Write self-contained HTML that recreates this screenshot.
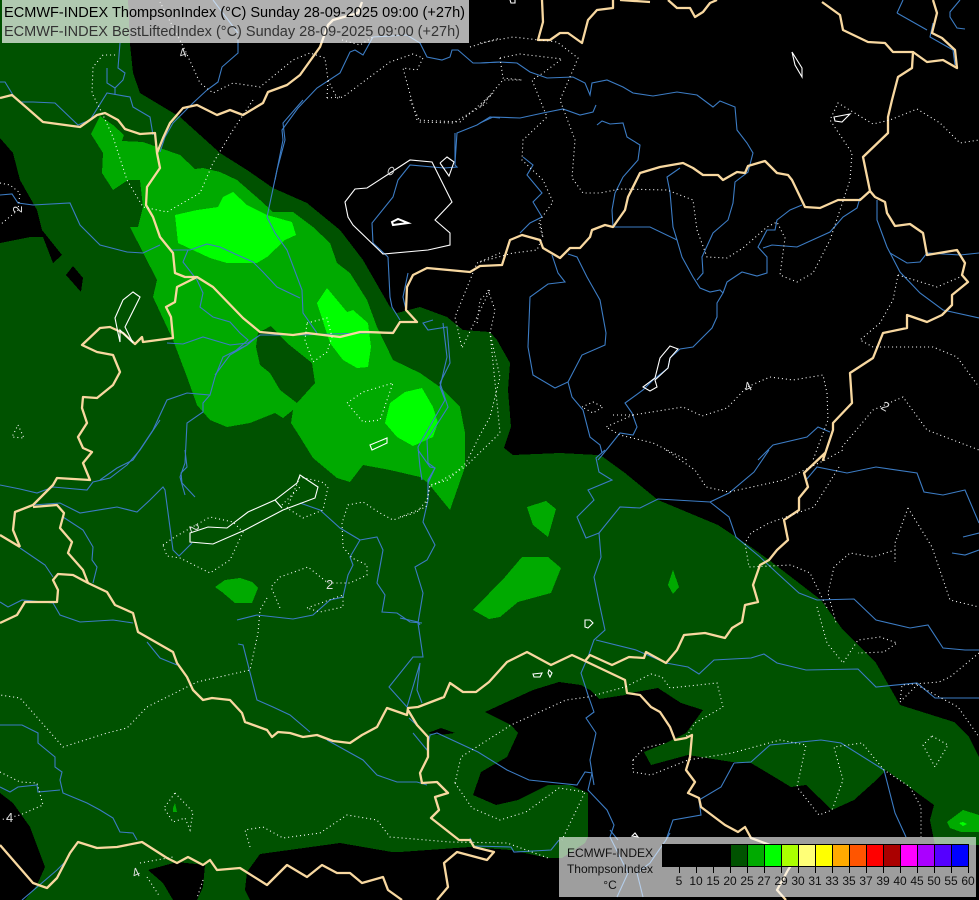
<!DOCTYPE html>
<html><head><meta charset="utf-8"><style>
html,body{margin:0;padding:0;background:#000;width:979px;height:900px;overflow:hidden}
svg{display:block}
text{font-family:"Liberation Sans",sans-serif}
.f{shape-rendering:crispEdges}
.d{fill:#005200}.m{fill:#00aa00}.b{fill:#00ff00}
.r polyline{fill:none;stroke:#3c7cc4;stroke-width:1.1}
.c polyline{fill:none;stroke:#f8d8a0;stroke-width:2.3;stroke-linejoin:round}
.t polyline{fill:none;stroke:#fff;stroke-width:1.1;stroke-dasharray:1 3;stroke-linecap:butt}
.w polyline,.w polygon{fill:none;stroke:#fff;stroke-width:1.1}
.l text{fill:#ddd;font-size:13px}
.k text{font-size:12px;fill:#111;text-anchor:middle}
</style></head><body>
<svg width="979" height="900" viewBox="0 0 979 900" xmlns="http://www.w3.org/2000/svg">
<rect width="979" height="900" fill="#000"/>
<g class="f">
<polygon class="d" points="0,0 128,0 130,44 133,73 140,93 180,117 220,153 247,170 273,188 307,203 340,230 363,260 390,307 397,313 420,307 447,317 463,330 490,332 497,340 510,363 508,390 511,427 504,448 513,455 560,453 597,455 603,457 625,473 658,500 718,525 751,547 769,560 821,600 843,630 876,663 900,705 954,722 969,737 979,757 979,845 935,845 930,820 934,805 886,770 873,783 854,800 832,810 806,785 791,787 751,763 732,762 688,755 651,765 644,752 666,743 686,733 703,710 681,703 658,688 636,692 625,695 599,699 590,690 581,685 559,682 533,690 485,712 511,725 518,733 507,757 481,772 473,795 496,805 518,800 548,785 570,785 588,793 588,837 585,843 562,858 548,858 511,850 470,847 400,852 392,852 340,843 260,854 247,872 245,890 250,900 197,900 203,887 205,865 177,862 148,870 163,883 173,900 25,900 37,885 45,867 30,827 13,803 0,793"/>
<polygon fill="#000" points="0,138 13,153 20,180 37,210 42,230 62,255 53,263 43,237 30,237 0,243"/>
<polygon fill="#000" points="66,275 73,266 83,278 81,292"/>
<polygon fill="#000" points="428,733 441,728 455,733 440,735"/>
<polygon class="m" points="91,134 100,116 113,125 124,135 122,141 143,142 180,155 195,169 203,168 220,172 237,180 260,200 273,212 293,212 313,227 330,243 337,263 350,273 367,300 377,327 393,360 420,373 440,387 460,407 465,433 465,467 450,510 428,483 420,477 390,470 363,465 350,482 337,478 313,458 300,437 291,423 293,410 283,418 275,413 250,423 227,427 210,420 197,405 187,377 173,340 153,297 157,280 130,227 138,227 143,207 140,180 128,180 113,190 102,173 103,153"/>
<polygon class="d" points="297,403 315,383 312,363 287,343 271,326 258,333 256,347 260,365 270,373 280,390"/>
<polygon class="m" points="215,587 225,580 240,578 252,582 258,588 252,603 235,603 222,592"/>
<polygon class="m" points="527,507 546,501 556,509 548,537 533,525"/>
<polygon class="m" points="473,610 505,577 522,557 548,557 561,568 551,593 518,602 500,617 489,619"/>
<polygon class="m" points="673,570 679,587 673,594 668,585"/>
<polygon class="m" points="947,822 963,810 979,815 979,832 961,832 950,828"/>
<polygon class="m" points="173,808 175,803 177,812 173,812"/>
<polygon class="b" points="175,215 197,210 218,207 223,197 233,192 247,205 267,215 292,222 296,235 285,240 267,257 257,263 227,263 210,258 178,243"/>
<polygon class="b" points="327,288 347,312 353,310 368,323 371,347 368,367 357,368 343,360 330,343 317,303"/>
<polygon class="b" points="422,388 433,407 438,423 433,437 413,446 397,437 385,423 390,403 405,392"/>
<polygon class="b" points="959,823 963,822 967,824 963,826"/>
</g>
<g class="r">
<polyline points="480,63 500,62 517,63 530,72 547,78 573,77 585,83 590,95 592,83 607,80 623,87 633,93 653,96 677,92 697,95 713,107 720,101 735,107 737,130 747,143 753,153 748,172 735,182 733,203 728,220 713,233 702,257 703,273 697,280"/>
<polyline points="480,123 493,117 520,118 543,113 563,109 580,115 593,112 596,105"/>
<polyline points="597,125 602,121 610,124 623,123 627,137 640,145 638,160 623,177 615,193 612,210 613,227"/>
<polyline points="523,157 533,165 527,175 542,193 533,202 542,217 530,223 520,233"/>
<polyline points="680,168 667,177 670,192 673,227 677,240 650,227 613,227"/>
<polyline points="677,240 682,257 693,277 700,288 710,292 720,290 723,293 717,303 717,317 712,328 705,335 693,347 680,349 670,358 668,368 653,380 643,390 625,403 632,413 637,427 633,435 620,433 608,448 598,460"/>
<polyline points="723,293 727,282 742,272 757,276 767,273 767,257 758,247 767,230 775,230 777,220 790,210 802,205"/>
<polyline points="763,248 772,245 797,247 830,232 843,217 857,208 860,198"/>
<polyline points="877,200 877,220 887,247 900,272 920,293 943,310 979,318"/>
<polyline points="890,253 907,263 920,262 927,253 960,255 979,253"/>
<polyline points="933,23 930,37 953,50 955,65"/>
<polyline points="897,13 927,30"/><polyline points="897,13 903,0"/>
<polyline points="960,0 950,12 950,17 957,28 965,29"/>
<polyline points="552,255 558,273 565,282 548,284 530,297 528,347 533,375 555,388 568,382 582,355 605,345 606,333 600,300 587,277 577,257 568,254"/>
<polyline points="568,382 572,397 583,410 590,437 600,445 602,453"/>
<polyline points="758,460 773,445 807,437 818,427 830,432"/>
<polyline points="275,180 283,140 282,130 298,108 317,88 340,73 350,52 355,50 363,55 373,37 407,35 420,43 427,57 442,60 450,57 452,50 458,50 473,63 480,63"/>
<polyline points="455,163 457,133 477,125 490,117 500,118"/>
<polyline points="0,485 20,489 37,493 53,487 87,490 93,482 110,478 127,465 140,450 160,420"/>
<polyline points="33,505 60,503 80,513 117,507 137,512 150,500 163,487 165,490 173,550 179,556 192,543"/>
<polyline points="185,450 187,467 181,473 182,483 195,497"/>
<polyline points="63,517 83,530 93,547 92,560 97,567 93,583"/>
<polyline points="20,548 45,565 53,577"/>
<polyline points="0,602 8,607 22,600 53,603 60,615 80,622 113,620 133,623"/>
<polyline points="147,642 160,658 177,665"/>
<polyline points="237,620 257,615 293,619 313,615 330,600 343,597 348,575 353,565 350,557 360,540 340,528 320,510 300,503"/>
<polyline points="360,540 377,537 383,550 377,583 385,595 382,612 397,613 410,622 422,623"/>
<polyline points="418,450 430,467 435,468 428,480 428,500 423,522 435,545 427,560 415,567 423,593 418,623 422,650 423,657 413,657 389,687 407,707 420,663 417,690 422,703"/>
<polyline points="238,644 243,645 257,700 273,707 290,715 310,732"/>
<polyline points="327,740 363,760 377,775 397,782 417,782 427,785"/>
<polyline points="0,725 22,725 38,733 38,743 55,757 55,767 62,772 60,780 63,793 87,803 100,810 113,818 120,832 133,833 137,840"/>
<polyline points="0,787 10,792 18,787 37,785 38,792 60,790"/>
<polyline points="22,900 57,870 67,860"/>
<polyline points="413,733 427,750 430,735 437,733 478,752 507,770 529,780 577,785 585,772 592,773 588,790 607,810 614,825 610,837 623,863 628,873 617,897"/>
<polyline points="596,733 586,718 594,712 588,695 581,673 588,657 594,640 605,630 599,602 594,577 601,557 599,533 586,538 577,517 594,500 588,490 612,480 599,472 596,458 605,450"/>
<polyline points="596,733 590,760 594,785"/>
<polyline points="599,533 603,528 620,507 640,508 658,499 710,502 729,517 736,537 760,557 777,573 799,593 817,600 854,599 876,620 910,628 928,625 943,648 965,650 979,650"/>
<polyline points="710,502 729,493 754,472 769,450"/>
<polyline points="806,480 817,467 847,473 876,467 917,473 924,492 943,495 965,490 979,523"/>
<polyline points="979,533 963,537"/><polyline points="952,553 965,555 979,550"/>
<polyline points="596,640 636,650 666,663 688,667 699,674 714,660 751,658 764,654 777,663 806,670 858,669 876,687 917,683 935,698 979,698"/>
<polyline points="734,763 751,762 770,745 791,743 821,740 841,743 884,770 895,813 906,837"/>
<polyline points="734,763 721,787 699,800 701,815 673,820 666,840 650,863 637,873 643,897"/>
<polyline points="400,618 418,622 420,625"/>
<polyline points="409,718 422,730"/>
<polyline points="470,838 474,846 511,847 514,852 551,850 559,840"/>
<polyline points="610,830 618,840"/><polyline points="670,833 666,840"/>
<polyline points="0,82 5,82 13,95 20,102 33,102 55,103 78,125 90,120 107,93 130,97 133,107 150,117 153,135"/>
<polyline points="120,43 118,68 125,73 123,80 115,88 115,95"/><polyline points="107,68 107,83 115,88"/>
<polyline points="238,40 238,53 222,67 218,82 207,90 193,103 173,123 165,137 160,152"/>
<polyline points="303,100 283,123 285,140 277,170 267,217 275,233 287,250 302,290 303,313 317,333"/>
<polyline points="0,195 12,194 18,203 33,205 70,203 80,225 100,245 127,252 143,253 160,245"/>
<polyline points="170,250 190,250 207,244 220,247 233,253 253,262 263,272 277,287 300,298"/>
<polyline points="188,250 183,262 197,280 203,293 200,307 213,317 230,322 240,333 248,340 233,353"/>
<polyline points="167,343 183,344 203,337 230,345 248,343 260,335 300,335 395,332"/>
<polyline points="257,337 247,345 223,357 215,377 210,395 187,393 167,400 153,430 133,460 117,468 100,480"/>
<polyline points="247,345 230,355 215,375"/>
<polyline points="210,395 203,403 203,412 187,423 185,463 180,477 185,495"/>
<polyline points="388,257 390,297 392,307 400,320"/>
<polyline points="455,133 455,165 457,167 444,168 410,165 398,180 393,197 372,223 373,243 388,257"/>
<polyline points="408,273 403,297 406,310"/>
<polyline points="433,320 423,323 428,330 447,327 450,363 440,383 448,407 427,440 428,463 435,468 428,483 428,500"/>
<polyline points="443,323 447,357 440,387 445,400 418,447 420,467 422,480"/>
<polyline points="213,0 238,33"/>
<polyline points="500,62 480,63"/>
</g>
<g class="c">
<polyline points="0,98 12,95 27,108 43,122 80,127 97,115 105,113 118,120 125,129 140,134 155,133 157,153 160,168 147,187 146,205 153,217 160,237 173,253 175,273 185,277 197,277 177,287 175,302 166,307 171,317 173,338 143,342 142,337 135,344 123,333 110,327 100,328 82,345 97,352 113,355 120,372 113,385 97,398 83,397 82,408 87,423 78,437 83,448 92,452 83,463 90,480 57,478 53,485 33,505 15,512 13,530 20,547"/>
<polyline points="0,535 20,547"/>
<polyline points="33,507 57,505 64,513 60,528 72,542 68,553 83,570 88,583"/>
<polyline points="0,623 17,615 25,602 57,602 58,590 53,580 58,574 73,575 88,583 107,592 115,605 133,613 138,632 173,652 177,663 187,677 193,690 203,700 212,698 230,700 242,713 245,722 267,730 272,737 278,732 290,733 303,737 317,735 333,741 350,743 362,735 377,727 387,708 407,715 408,708 418,707 444,697 450,683 463,692 476,692 489,682 507,662 527,652 551,665 572,655 585,661 590,655 612,665 629,657 644,658 646,652 666,663 677,650 684,635 705,633 725,638 732,628 742,622 745,605 758,602 753,585 760,565 769,560 777,550 788,540 784,520 799,510 799,498 808,487 804,473 825,453 823,460 833,430 833,423 852,403 850,373 873,358 883,333 907,328 907,315 927,322 942,315 952,305 952,295 968,282 962,275 965,263 957,250 927,255 923,233 910,224 895,226 887,213 885,202 875,197 870,191 860,200 838,200 820,208 805,207 792,180 788,175 777,173 765,161 748,166 745,173 737,172 723,180 718,175 703,175 693,168 683,163 660,167 640,173 628,197 625,210 613,227 605,225 592,230 590,237 580,248 570,248 560,258 543,248 540,240 522,235 510,240 502,265 480,266 470,272 427,268 413,275 407,287 406,310 417,322 400,322 393,333 367,332 360,332 340,337 307,333 293,335 260,332 243,318 213,287 197,277"/>
<polyline points="870,191 863,157 888,133 888,117 892,100 898,77 912,68 913,52 893,52 885,43 868,42 843,30 840,15 822,2"/>
<polyline points="913,52 927,62 943,60 957,68 955,50 942,38 932,33 937,13 933,0"/>
<polyline points="668,0 677,8 690,8 695,17 703,12 710,3 717,0"/>
<polyline points="542,0 543,22 538,40 550,40 560,33 568,33 582,43 588,20 597,10 613,8 613,0"/>
<polyline points="620,0 650,2"/>
<polyline points="362,2 358,13 333,20 328,25 320,47 300,75 287,85 268,92 263,103 243,115 230,110 217,115 197,105 183,108 170,123 163,138 157,153"/>
<polyline points="408,710 417,725 428,737 428,757 420,773 422,783 437,782 448,793 435,797 439,810 431,818 459,840 470,840 474,847 494,852 487,860 457,852 444,863 448,887 437,900"/>
<polyline points="0,845 33,883 47,888 57,878 70,853 78,842 97,848 117,847 142,842 167,858 177,863 188,857 203,865 210,860 217,870 240,868 267,885 287,865 307,877 322,865 337,873 350,873 362,883 383,877 388,890 402,900"/>
<polyline points="585,661 625,680 627,693 640,695 651,707 660,712 670,727 675,740 686,738 692,735 690,757 686,770 695,782 688,793 699,798 701,807 725,825 738,832 745,827 751,838 770,845 790,867 788,870 777,890 786,900"/>
</g>
<g class="t">
<polyline points="480,43 513,37 557,42 578,58 573,70 560,100 575,140 572,178 583,193 600,193 620,189 667,190 693,200 697,230 707,257 727,258 743,248 767,227 777,222 785,238 780,275 797,282 813,273 830,240 850,180 852,153 830,120 838,103 873,124 890,120 917,109 940,123 960,143 979,140"/>
<polyline points="500,58 520,54 562,59 543,73 532,80 547,117 523,140 522,160 543,180 553,202 540,220 543,238"/>
<polyline points="500,58 503,78 522,80 503,80 480,107 493,93 460,122 417,120 403,68 417,70 423,58 413,54 390,62 343,97 337,98 328,80 325,58 310,53 293,60 260,87 233,83 213,93 200,83 185,50 160,2"/>
<polyline points="470,47 500,38"/>
<polyline points="327,98 340,97"/><polyline points="327,98 328,80"/>
<polyline points="342,40 360,45 373,37"/>
<polyline points="253,100 233,130 213,163 200,193 167,212 143,207 127,180 113,137 103,115 92,93 93,67 103,55 117,55"/>
<polyline points="480,262 513,253 537,250 542,238"/>
<polyline points="539,223 543,238"/>
<polyline points="488,290 495,310 490,333 500,377 490,417 480,435 466,463 448,480 430,485 427,500 417,512 393,520 380,513 363,502 348,505 342,523 343,547 352,558 367,565 367,575 350,583 328,583 308,567 280,577 271,587 280,608"/>
<polyline points="267,598 260,610 258,633 250,670 197,682 147,707 127,728 107,733 63,747 28,707 20,698 0,695"/>
<polyline points="307,608 343,595 343,607 320,612 307,608"/>
<polyline points="163,545 173,538 210,517 233,522 243,532 230,560 210,573 180,558 167,556 163,545"/>
<polyline points="322,482 328,487 323,510 303,518 287,508 300,477 322,482"/>
<polyline points="282,505 300,487"/>
<polyline points="175,793 193,812 190,830 185,818 173,822 164,808 175,793"/>
<polyline points="0,772 20,782 37,783 43,805 20,815 0,820"/>
<polyline points="250,847 245,830 263,827 283,838 320,833 347,815 377,820 390,837 450,842 507,843 548,858"/>
<polyline points="140,863 173,857"/><polyline points="147,877 160,897"/>
<polyline points="203,880 197,898"/>
<polyline points="400,517 426,507 430,485"/>
<polyline points="455,783 461,757 511,725 566,700 588,697 625,687 651,674 662,677 670,688 717,683 723,707 695,723 686,737"/>
<polyline points="455,783 472,808 500,820 526,812 559,788 585,792 562,840"/>
<polyline points="633,760 644,748 666,743"/>
<polyline points="633,760 633,772 651,775 688,760 732,753 780,740 806,745 797,787 819,815 832,810 843,780 834,747 862,743 884,770 910,787 921,807 921,837"/>
<polyline points="932,736 948,745 935,767 923,745 932,736"/>
<polyline points="666,450 695,470 706,487 729,492 784,480 825,460 843,450"/>
<polyline points="839,467 814,507 769,523 751,533 745,543 749,567 791,565 810,573 828,610"/>
<polyline points="817,607 827,643 843,663 858,640 880,637 897,643 884,652 858,653"/>
<polyline points="908,508 895,543 895,562 895,550 873,557 850,553 834,567 828,593 836,623"/>
<polyline points="908,508 932,547 950,600 979,607"/>
<polyline points="979,653 950,677 939,682 902,685 900,702 917,685 958,707 979,737"/>
<polyline points="898,275 893,300 880,323 860,340 873,347 933,347 957,357 979,387"/>
<polyline points="898,275 937,287 960,277"/>
<polyline points="633,415 683,407 702,416 727,408 747,387 770,377 793,380 823,375 827,393 828,420 813,460"/>
<polyline points="842,447 873,410 903,397 927,430 979,450"/>
<polyline points="582,407 593,402 603,407 593,413 582,407"/>
<polyline points="613,415 633,415 606,427 620,435 653,443 687,460"/>
<polyline points="0,183 10,185 20,193 18,210 0,225"/>
<polyline points="18,425 24,438 12,437 18,425"/>
<polyline points="307,323 327,318 332,337 327,352 313,362 305,340 307,323"/>
<polyline points="347,403 363,392 393,383 380,420 363,422 347,403"/>
<polyline points="410,100 420,122 453,123 487,103"/>
<polyline points="500,253 477,263 455,317 462,348 490,290 480,300 477,325"/>
<polyline points="490,332 500,433 465,467 430,487"/>
</g>
<g class="w">
<polygon points="345,202 355,189 367,188 387,175 410,160 432,162 452,202 435,220 450,233 450,245 428,250 383,254 353,225 348,217"/>
<polygon points="392,222 398,219 408,223 393,225" style="stroke-width:2"/>
<polyline points="440,163 447,157 454,162 449,176 440,163"/>
<polygon points="140,297 133,292 123,300 115,318 118,333 120,342 120,330 133,343 125,327"/>
<polygon points="300,475 297,483 275,500 248,512 227,528 208,527 190,533 190,542 213,544 245,530 283,510 315,498 318,487"/>
<polyline points="275,500 282,508"/>
<polygon points="370,445 387,438 387,443 372,450"/>
<polygon points="792,52 802,68 802,77 795,65"/>
<polygon points="834,117 850,114 842,122 835,121"/>
<polygon points="643,387 655,378 660,358 670,346 678,349 670,358 668,368 655,380 657,387 650,391"/>
<polygon points="585,620 590,620 593,623 588,628 585,627"/>
<polygon points="533,674 542,673 540,677 534,677"/>
<polygon points="549,670 552,673 550,677 548,673"/>
<polygon points="632,836 635,833 638,837"/>
<polyline points="510,0 511,3 515,3 515,0"/>
</g>
<ellipse cx="391" cy="171" rx="2.6" ry="4" fill="none" stroke="#ccc" stroke-width="1" transform="rotate(25 391 171)"/>
<g class="l">
<text x="179" y="57" transform="rotate(-18 184 52)">4</text>
<text x="12" y="213" transform="rotate(-90 17 208)">2</text>
<text x="191" y="533" transform="rotate(70 195 528)">2</text>
<text x="326" y="589">2</text>
<text x="744" y="391" transform="rotate(-25 748 386)">4</text>
<text x="882" y="411" transform="rotate(30 886 406)">2</text>
<text x="6" y="822">4</text>
<text x="132" y="877" transform="rotate(-25 136 872)">4</text>
</g>
<!-- header -->
<rect x="2" y="0" width="467" height="43" fill="rgba(255,255,255,.69)"/>
<text x="4" y="17" font-size="15" fill="#000" textLength="461" lengthAdjust="spacingAndGlyphs">ECMWF-INDEX ThompsonIndex (°C) Sunday 28-09-2025 09:00 (+27h)</text>
<text x="4" y="36" font-size="15" fill="#333" textLength="456" lengthAdjust="spacingAndGlyphs">ECMWF-INDEX BestLiftedIndex (°C) Sunday 28-09-2025 09:00 (+27h)</text>
<!-- legend -->
<rect x="559" y="837" width="417" height="60" fill="rgba(255,255,255,.62)"/>
<g class="f" stroke="#000" stroke-width="1">
<rect x="662.5" y="844.5" width="17" height="22" fill="#000"/>
<rect x="679.5" y="844.5" width="17" height="22" fill="#000"/>
<rect x="696.5" y="844.5" width="17" height="22" fill="#000"/>
<rect x="713.5" y="844.5" width="17" height="22" fill="#000"/>
<rect x="730.5" y="844.5" width="17" height="22" fill="#005200"/>
<rect x="747.5" y="844.5" width="17" height="22" fill="#00aa00"/>
<rect x="764.5" y="844.5" width="17" height="22" fill="#00ff00"/>
<rect x="781.5" y="844.5" width="17" height="22" fill="#aaff00"/>
<rect x="798.5" y="844.5" width="17" height="22" fill="#ffff77"/>
<rect x="815.5" y="844.5" width="17" height="22" fill="#ffff00"/>
<rect x="832.5" y="844.5" width="17" height="22" fill="#ffaa00"/>
<rect x="849.5" y="844.5" width="17" height="22" fill="#ff5500"/>
<rect x="866.5" y="844.5" width="17" height="22" fill="#ff0000"/>
<rect x="883.5" y="844.5" width="17" height="22" fill="#aa0000"/>
<rect x="900.5" y="844.5" width="17" height="22" fill="#ff00ff"/>
<rect x="917.5" y="844.5" width="17" height="22" fill="#aa00ff"/>
<rect x="934.5" y="844.5" width="17" height="22" fill="#5500ff"/>
<rect x="951.5" y="844.5" width="17" height="22" fill="#0000ff"/>
<path fill="none" d="M679.5 866V873M696.5 866V873M713.5 866V873M730.5 866V873M747.5 866V873M764.5 866V873M781.5 866V873M798.5 866V873M815.5 866V873M832.5 866V873M849.5 866V873M866.5 866V873M883.5 866V873M900.5 866V873M917.5 866V873M934.5 866V873M951.5 866V873M968.5 866V873"/>
</g>
<g class="k">
<text x="610" y="857">ECMWF-INDEX</text>
<text x="610" y="873">ThompsonIndex</text>
<text x="610" y="889">°C</text>
<text x="679" y="885">5</text><text x="696" y="885">10</text><text x="713" y="885">15</text><text x="730" y="885">20</text><text x="747" y="885">25</text><text x="764" y="885">27</text><text x="781" y="885">29</text><text x="798" y="885">30</text><text x="815" y="885">31</text><text x="832" y="885">33</text><text x="849" y="885">35</text><text x="866" y="885">37</text><text x="883" y="885">39</text><text x="900" y="885">40</text><text x="917" y="885">45</text><text x="934" y="885">50</text><text x="951" y="885">55</text><text x="968" y="885">60</text>
</g>
</svg>
</body></html>
